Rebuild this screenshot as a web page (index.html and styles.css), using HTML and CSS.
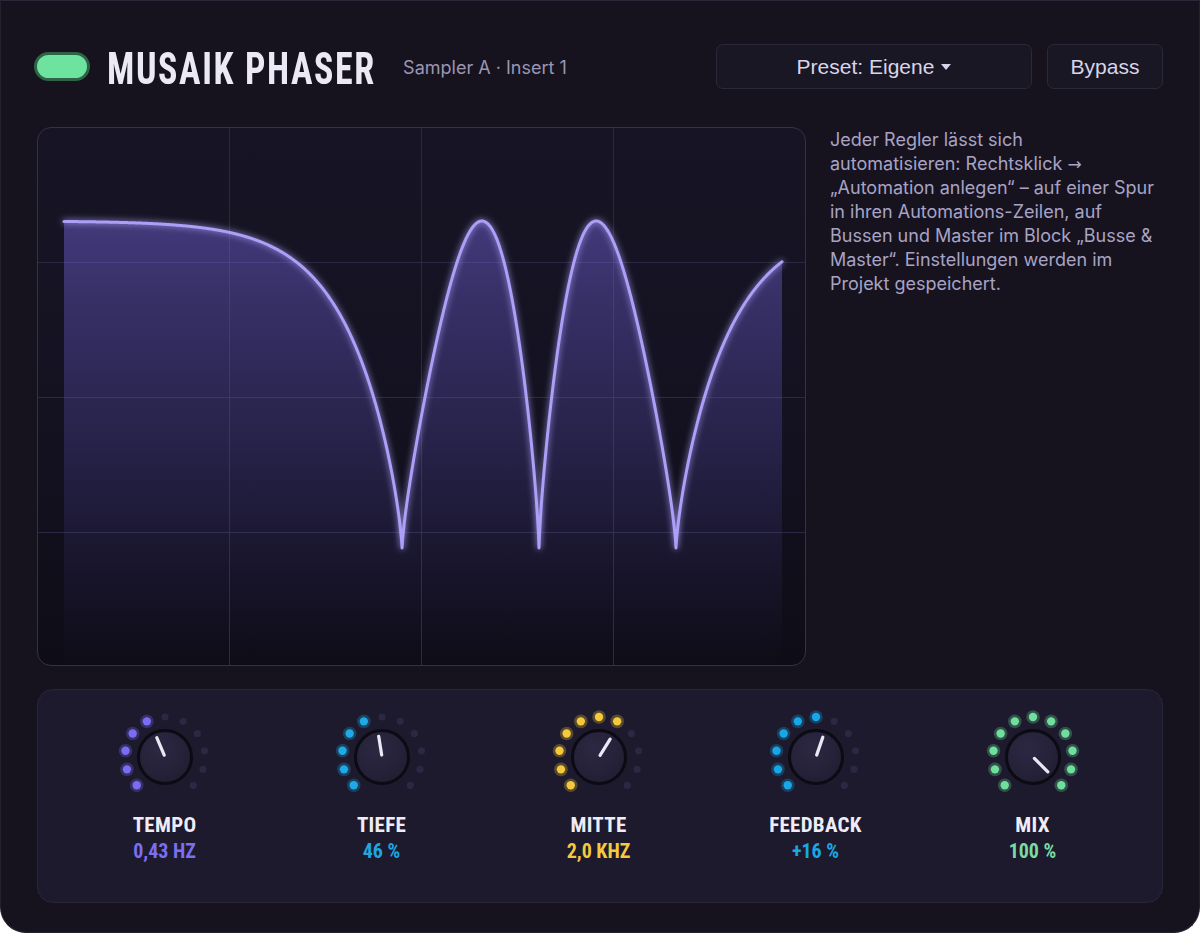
FILE: index.html
```html
<!DOCTYPE html>
<html lang="de">
<head>
<meta charset="utf-8">
<title>Musaik Phaser</title>
<link rel="stylesheet" href="styles.css">
</head>
<body>
<div class="plugin">
  <header class="top">
    <div class="brand">
      <span class="power"></span>
      <h1 class="title">MUSAIK PHASER</h1>
      <span class="sub">Sampler A · Insert 1</span>
    </div>
    <div class="actions">
      <button class="btn preset">Preset: Eigene<span class="caret"></span></button>
      <button class="btn bypass">Bypass</button>
    </div>
  </header>

  <section class="main">
    <div class="scope">
      <svg class="scope-svg" viewBox="0 0 767 537" width="767" height="537">
        <defs>
          <linearGradient id="area" x1="0" y1="93" x2="0" y2="537" gradientUnits="userSpaceOnUse">
            <stop offset="0" stop-color="#7d6cf0" stop-opacity="0.42"/>
            <stop offset="0.55" stop-color="#6a5bd6" stop-opacity="0.2"/>
            <stop offset="1" stop-color="#5a4cc0" stop-opacity="0"/>
          </linearGradient>
          <filter id="glow" x="-5%" y="-10%" width="110%" height="120%">
            <feGaussianBlur stdDeviation="3" result="b"/>
            <feMerge><feMergeNode in="b"/><feMergeNode in="SourceGraphic"/></feMerge>
          </filter>
        </defs>
        <g class="grid">
          <line x1="191.5" y1="0" x2="191.5" y2="537"/>
          <line x1="383.5" y1="0" x2="383.5" y2="537"/>
          <line x1="575.5" y1="0" x2="575.5" y2="537"/>
          <line x1="0" y1="134.5" x2="767" y2="134.5"/>
          <line x1="0" y1="269.5" x2="767" y2="269.5"/>
          <line x1="0" y1="404.5" x2="767" y2="404.5"/>
        </g>
        <path id="curve-fill" class="curve-fill" d=""/>
        <path id="curve-line" class="curve-line" d=""/>
      </svg>
    </div>
    <p class="help">Jeder Regler lässt sich<br>automatisieren: Rechtsklick <span class="arrow">→</span><br>„Automation anlegen“ – auf einer Spur<br>in ihren Automations-Zeilen, auf<br>Bussen und Master im Block „Busse &amp;<br>Master“. Einstellungen werden im<br>Projekt gespeichert.</p>
  </section>

  <section class="controls">
    <div class="ctl">
      <div class="knob" data-angle="-23" data-color="#7b6cf6"></div>
      <div class="name">TEMPO</div>
      <div class="val tempo">0,43 HZ</div>
    </div>
    <div class="ctl">
      <div class="knob" data-angle="-9" data-color="#1eaae6"></div>
      <div class="name">TIEFE</div>
      <div class="val tiefe">46 %</div>
    </div>
    <div class="ctl">
      <div class="knob" data-angle="32" data-color="#f6c93c"></div>
      <div class="name">MITTE</div>
      <div class="val mitte">2,0 KHZ</div>
    </div>
    <div class="ctl">
      <div class="knob" data-angle="19" data-color="#17a7e8"></div>
      <div class="name">FEEDBACK</div>
      <div class="val feedback">+16 %</div>
    </div>
    <div class="ctl">
      <div class="knob" data-angle="135" data-color="#6fdf9d"></div>
      <div class="name">MIX</div>
      <div class="val mix">100 %</div>
    </div>
  </section>
</div>
<script src="ui.js"></script>
</body>
</html>
```

FILE: styles.css
```css
* { box-sizing: border-box; }

html, body {
  margin: 0;
  background: #ffffff;
}

body {
  font-family: "Inter", "Roboto", sans-serif;
}

.plugin {
  width: 1200px;
  height: 933px;
  background: #16131f;
  border: 1px solid #24212f;
  border-top-color: #2c2839;
  border-radius: 0 0 26px 26px;
  padding: 43px 36px 0;
  display: flex;
  flex-direction: column;
}

/* header */
.top {
  display: flex;
  align-items: center;
  height: 45px;
}

.brand {
  display: flex;
  align-items: center;
}

.power {
  width: 56px;
  height: 29px;
  margin-left: -3px;
  border-radius: 15px;
  background: #6ee3a0;
  border: 3px solid #2d6447;
}

/* display face: condensed bold, narrowed a little further */
.title {
  margin: 4px -67px 0 17px;
  font-family: "Roboto Condensed", "Roboto", sans-serif;
  font-weight: 700;
  font-size: 45px;
  line-height: 1;
  letter-spacing: 2px;
  white-space: nowrap;
  color: #ece9f6;
  transform: scaleX(0.8);
  transform-origin: left center;
}

.sub {
  margin-left: 27px;
  margin-top: 2px;
  font-size: 18px;
  color: #9b96b2;
}

.actions {
  margin-left: auto;
  display: flex;
  gap: 15px;
}

.btn {
  height: 45px;
  background: #1a1724;
  border: 1px solid #2b2839;
  border-radius: 7px;
  color: #d8d4ea;
  font-family: "Liberation Sans", Arial, sans-serif;
  font-size: 21px;
  display: flex;
  align-items: center;
  justify-content: center;
  padding: 0;
}

.preset { width: 316px; }
.bypass { width: 116px; }

.caret {
  width: 0;
  height: 0;
  margin-left: 7px;
  border-left: 5.5px solid transparent;
  border-right: 5.5px solid transparent;
  border-top: 6px solid #d8d4ea;
}

/* scope + help */
.main {
  display: flex;
  gap: 24px;
  margin-top: 38px;
}

.scope {
  width: 769px;
  height: 539px;
  flex: none;
  border: 1px solid #35304d;
  border-radius: 14px;
  overflow: hidden;
  background: linear-gradient(180deg, #171525 0%, #141221 55%, #0e0c16 100%);
}

.scope-svg { display: block; }

.grid line {
  stroke: #2c2844;
  stroke-width: 1;
}

.curve-fill { fill: url(#area); }

.curve-line {
  fill: none;
  stroke: #ab9ff8;
  stroke-width: 3;
  stroke-linejoin: round;
  stroke-linecap: round;
  filter: url(#glow);
}

.help {
  margin: 1px 0 0;
  flex: 1;
  white-space: nowrap;
  font-size: 18px;
  line-height: 24px;
  color: #a8a3c5;
}

.arrow {
  font-family: "DejaVu Sans", sans-serif;
  font-size: 17px;
}

/* knob strip */
.controls {
  margin-top: 23px;
  height: 214px;
  border: 1px solid #29263b;
  border-radius: 16px;
  background: #1c1a2c;
  display: grid;
  grid-template-columns: repeat(5, 1fr);
  padding: 17px 21px 0 18px;
}

.ctl {
  display: flex;
  flex-direction: column;
  align-items: center;
}

.knob {
  width: 100px;
  height: 100px;
}

.knob svg { display: block; }

.knob .off { fill: #2c2843; }

.name, .val {
  font-family: "Roboto Condensed", "Roboto", sans-serif;
  font-weight: 700;
  font-size: 21px;
  line-height: 26px;
  letter-spacing: 0.3px;
}

.name {
  margin-top: 5px;
  color: #efecf7;
}

.val { font-size: 20px; letter-spacing: 0; }
.val.tempo { color: #7c6ef2; }
.val.tiefe { color: #1fa6e0; }
.val.mitte { color: #f4c93e; }
.val.feedback { color: #1ca6e4; }
.val.mix { color: #78dca2; }
```

FILE: ui.js
```js
// Phaser response: six all-pass stages mixed with the dry signal,
// plotted on a log frequency axis (20 Hz .. 20 kHz, centre 2 kHz).
(function () {
  var x0 = 26, x1 = 744, xc = 501, k = 104;
  var top = 93, bottom = 420, floor = 537;

  function mag(x) {
    var w = Math.exp((x - xc) / k);
    return Math.pow(Math.abs(Math.cos(6 * Math.atan(w))), 0.75);
  }

  var xs = [];
  for (var x = x0; x <= x1; x += 0.5) xs.push(x);
  // exact notch positions so the cusps reach the floor
  [Math.PI / 12, Math.PI / 4, 5 * Math.PI / 12].forEach(function (a) {
    xs.push(xc + k * Math.log(Math.tan(a)));
  });
  xs.sort(function (a, b) { return a - b; });

  var pts = xs.map(function (x) {
    var y = bottom - (bottom - top) * mag(x);
    return x.toFixed(2) + "," + y.toFixed(2);
  });

  var line = "M" + pts.join(" L");
  document.getElementById("curve-line").setAttribute("d", line);
  document.getElementById("curve-fill").setAttribute("d",
    line + " L" + x1 + "," + floor + " L" + x0 + "," + floor + " Z");
})();

// Knobs: 11 LED dots on a 270° arc plus a pointer.
(function () {
  var knobs = document.querySelectorAll(".knob");
  knobs.forEach(function (el, n) {
    var ang = parseFloat(el.dataset.angle);
    var col = el.dataset.color;
    var id = "kb" + n;
    var s = '<svg viewBox="0 0 100 100" width="100" height="100">' +
      '<defs><radialGradient id="' + id + '" cx="0.4" cy="0.35" r="0.7">' +
      '<stop offset="0" stop-color="#2c2843"/><stop offset="1" stop-color="#211e33"/>' +
      '</radialGradient></defs>';
    for (var i = 0; i < 11; i++) {
      var a = -135 + 27 * i;
      var r = a * Math.PI / 180;
      var cx = (50 + 40 * Math.sin(r)).toFixed(2);
      var cy = (50 - 40 * Math.cos(r)).toFixed(2);
      if (a <= ang + 0.5) {
        s += '<circle cx="' + cx + '" cy="' + cy + '" r="6.8" fill="' + col + '" opacity="0.28"/>';
        s += '<circle cx="' + cx + '" cy="' + cy + '" r="4.2" fill="' + col + '"/>';
      } else {
        s += '<circle class="off" cx="' + cx + '" cy="' + cy + '" r="3.6"/>';
      }
    }
    s += '<circle cx="50" cy="50" r="26.5" fill="url(#' + id + ')" stroke="#0c0a13" stroke-width="3"/>';
    var p = ang * Math.PI / 180;
    var sx = 50 + 2 * Math.sin(p), sy = 50 - 2 * Math.cos(p);
    var ex = 50 + 21 * Math.sin(p), ey = 50 - 21 * Math.cos(p);
    s += '<line x1="' + sx.toFixed(2) + '" y1="' + sy.toFixed(2) + '" x2="' + ex.toFixed(2) +
      '" y2="' + ey.toFixed(2) + '" stroke="#ebe8f5" stroke-width="3.2" stroke-linecap="round"/>';
    s += "</svg>";
    el.innerHTML = s;
  });
})();
```
